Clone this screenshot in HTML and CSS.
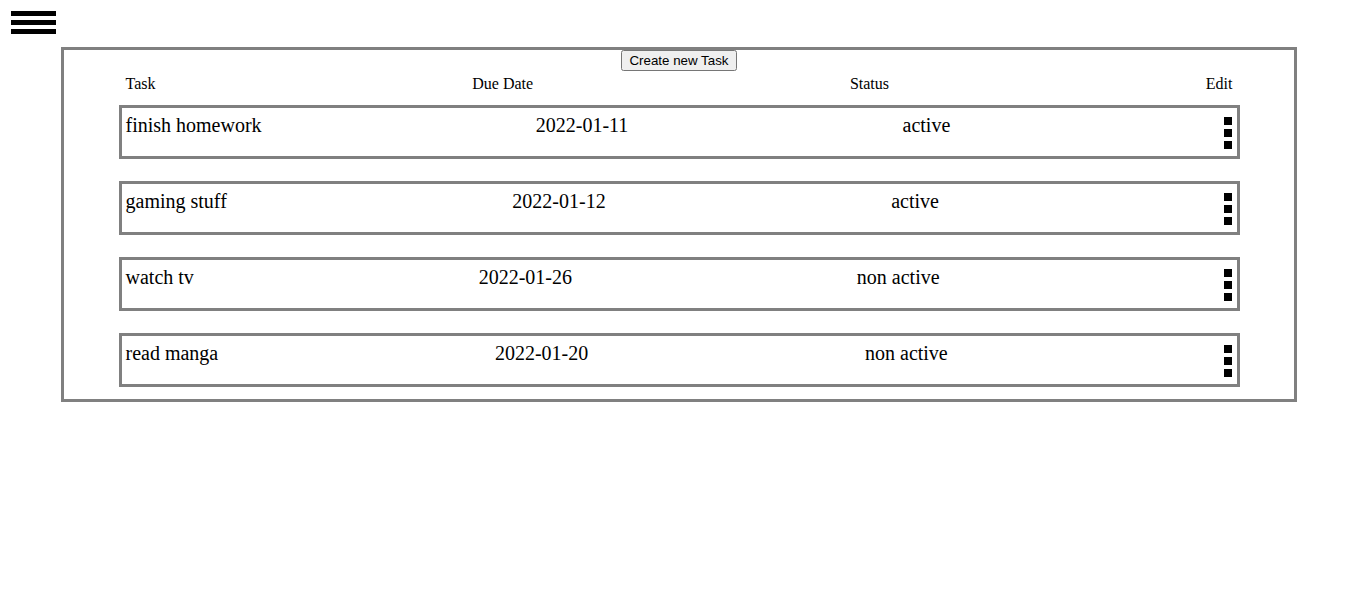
FILE: index.html
```html
<!DOCTYPE html>
<html>
<head>
<meta charset="utf-8">
<title>Tasks</title>
<link rel="stylesheet" href="styles.css">
</head>
<body>
<div class="menu">
  <div class="bar"></div>
  <div class="bar"></div>
  <div class="bar"></div>
</div>
<div class="board">
  <div class="actions"><button class="create">Create new Task</button></div>
  <div class="line head">
    <span>Task</span>
    <span>Due Date</span>
    <span>Status</span>
    <span>Edit</span>
  </div>
  <div class="list">
    <div class="line row">
      <span>finish homework</span>
      <span>2022-01-11</span>
      <span>active</span>
      <span class="dots"><i></i><i></i><i></i></span>
    </div>
    <div class="line row">
      <span>gaming stuff</span>
      <span>2022-01-12</span>
      <span>active</span>
      <span class="dots"><i></i><i></i><i></i></span>
    </div>
    <div class="line row">
      <span>watch tv</span>
      <span>2022-01-26</span>
      <span>non active</span>
      <span class="dots"><i></i><i></i><i></i></span>
    </div>
    <div class="line row">
      <span>read manga</span>
      <span>2022-01-20</span>
      <span>non active</span>
      <span class="dots"><i></i><i></i><i></i></span>
    </div>
  </div>
</div>
</body>
</html>
```
FILE: styles.css
```css
body {
  margin: 8px;
  font-family: "Liberation Serif", "Times New Roman", serif;
  color: #000;
  background: #fff;
}
.menu {
  width: 45px;
  padding: 3px;
  display: flex;
  flex-direction: column;
  gap: 4px;
}
.bar {
  height: 5px;
  background: #000;
}
.board {
  margin: 10px 53px 0;
  border: 3px solid #808080;
}
.actions {
  text-align: center;
  height: 21px;
}
.create {
  font-family: "Liberation Sans", Arial, sans-serif;
  font-size: 13.333px;
  margin: 0;
  vertical-align: top;
}
.line {
  width: 90%;
  margin: 0 auto;
  padding: 0 4px;
  border: 3px solid transparent;
  display: flex;
  justify-content: space-between;
  align-items: flex-start;
}
.head {
  font-size: 16px;
  border-width: 0 3px;
  padding-top: 4px;
}
.list {
  display: flex;
  flex-direction: column;
  gap: 22px;
  padding: 12px 0 12px;
}
.row {
  border-color: #808080;
  font-size: 20px;
  padding-top: 6px;
}
.dots {
  display: flex;
  flex-direction: column;
  gap: 4px;
  padding: 3px 0 7px;
}
.dots i {
  display: block;
  width: 8px;
  height: 8px;
  background: #000;
}
```
